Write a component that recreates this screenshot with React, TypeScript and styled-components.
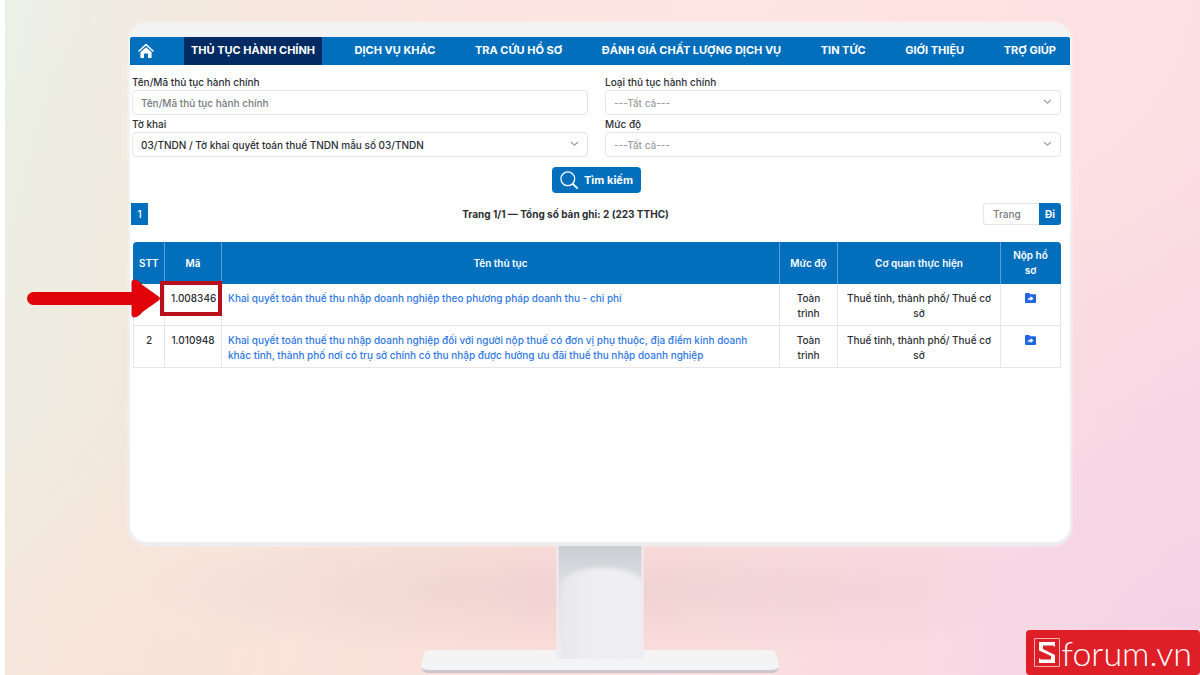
import React from "react";
import styled, { createGlobalStyle, css } from "styled-components";

const blue = "#026fbd";
const line = "#e4e6e8";

const GlobalStyle = createGlobalStyle`
  *, *::before, *::after { box-sizing: border-box; }
  body { margin: 0; background: #fff; font-family: Inter, "Noto Sans", sans-serif; font-weight: 500; color: #2b2f33; }
  button, input, select { font-family: inherit; font-weight: inherit; }
`;

const Scene = styled.div`
  position: relative;
  min-height: 100vh;
  margin-left: 5px;
  padding: 22px 128px 0 123px;
  overflow: hidden;
  background:
    radial-gradient(ellipse 460px 70px at 50% 590px, rgba(170, 140, 150, 0.16), transparent),
    radial-gradient(ellipse 500px 260px at 10% 100%, rgba(253, 224, 216, 0.5), transparent),
    radial-gradient(ellipse 700px 360px at 60% 0, rgba(255, 230, 228, 0.9), transparent),
    radial-gradient(ellipse 460px 460px at 100% 100%, rgba(244, 208, 230, 0.8), transparent),
    linear-gradient(105deg, #ebf0e6 0%, #f2e8dc 18%, #fcdfdb 50%, #fbdde2 85%, #f9d9e4 100%);
`;

const Monitor = styled.div`
  display: flex;
  flex-direction: column;
  padding: 15px 2px 4px;
  border-radius: 20px;
  background: linear-gradient(#f3f3f4, #ececee);
  box-shadow: 0 0 2px rgba(255, 255, 255, 0.8);
`;

const Screen = styled.main`
  min-height: 505px;
  border-radius: 2px 2px 16px 16px;
  background: #fff;
`;

const Nav = styled.nav`
  display: flex;
  justify-content: space-between;
  height: 28px;
  padding-right: 7px;
  border-radius: 2px 2px 0 0;
  background: ${blue};
`;

const HomeLink = styled.a`
  display: flex;
  align-items: center;
  width: 54px;
  padding-left: 8px;
`;

const NavMenu = styled.div`
  flex: 1;
  display: flex;
  justify-content: space-between;
`;

const NavLink = styled.a<{ $active?: boolean }>`
  display: flex;
  align-items: center;
  padding: 0 7px 2px;
  font-size: 11px;
  line-height: 16px;
  font-weight: 700;
  white-space: nowrap;
  color: #fff;
  text-decoration: none;
  background: ${(p) => (p.$active ? "#032b63" : "transparent")};
`;

const SearchForm = styled.form`
  display: grid;
  grid-template-columns: 1fr 1fr;
  column-gap: 17px;
  padding: 9px 9px 0 2px;
`;

const Field = styled.div`
  display: flex;
  flex-direction: column;
  height: 42px;
`;

const Label = styled.label`
  font-size: 10px;
  line-height: 16px;
`;

const controlStyle = css`
  width: 100%;
  height: 25px;
  padding: 0 8px;
  border: 1px solid ${line};
  border-radius: 4px;
  background: #fff;
  font-size: 10px;
  outline: none;
`;

const TextInput = styled.input`
  ${controlStyle}
  color: #2b2f33;
  &::placeholder { color: #777b80; opacity: 1; }
`;

const SelectWrap = styled.div`
  position: relative;
  display: flex;
  svg { position: absolute; right: 9px; top: 8px; pointer-events: none; }
`;

const Select = styled.select<{ $muted?: boolean }>`
  ${controlStyle}
  appearance: none;
  color: ${(p) => (p.$muted ? "#9c9fa3" : "#2b2f33")};
`;

const SubmitRow = styled.div`
  grid-column: 1 / -1;
  display: flex;
  justify-content: center;
  padding-top: 9px;
`;

const SearchButton = styled.button`
  display: flex;
  align-items: center;
  gap: 6px;
  height: 26px;
  padding: 0 8px;
  border: 0;
  border-radius: 4px;
  background: ${blue};
  color: #fff;
  font-size: 11px;
  font-weight: 700;
`;

const Pager = styled.div`
  display: flex;
  align-items: center;
  justify-content: space-between;
  padding: 10px 9px 0 1px;
`;

const PageButton = styled.button`
  width: 17px;
  height: 22px;
  padding: 0;
  border: 0;
  background: ${blue};
  color: #fff;
  font-size: 10px;
`;

const Summary = styled.strong`
  font-size: 10px;
  line-height: 16px;
  font-weight: 700;
`;

const GoTo = styled.form`
  display: flex;
`;

const PageInput = styled.input`
  width: 56px;
  height: 22px;
  padding: 0 9px;
  border: 1px solid ${line};
  border-right: 0;
  border-radius: 3px 0 0 3px;
  font-size: 10px;
  outline: none;
  &::placeholder { color: #777b80; opacity: 1; }
`;

const GoButton = styled.button`
  width: 22px;
  height: 22px;
  padding: 0;
  border: 0;
  border-radius: 0 3px 3px 0;
  background: ${blue};
  color: #fff;
  font-size: 10px;
  font-weight: 700;
`;

const TableWrap = styled.div`
  padding: 17px 9px 0 3px;
`;

const Table = styled.table`
  width: 100%;
  table-layout: fixed;
  border-collapse: separate;
  border-spacing: 0;
  font-size: 10px;
  line-height: 15px;
`;

const Column = styled.col<{ $width?: number }>`
  width: ${(p) => (p.$width ? `${p.$width}px` : "auto")};
`;

const HeadCell = styled.th`
  height: 42px;
  padding: 0 6px;
  border-right: 1px solid #5b9fd2;
  background: ${blue};
  color: #fff;
  font-weight: 600;
  &:first-child { border-top-left-radius: 4px; }
  &:last-child { border-right-color: ${blue}; border-top-right-radius: 4px; }
`;

const Cell = styled.td<{ $name?: boolean }>`
  position: relative;
  height: 42px;
  padding: 7px ${(p) => (p.$name ? 18 : 6)}px 4px 6px;
  border-right: 1px solid ${line};
  border-bottom: 1px solid ${line};
  text-align: ${(p) => (p.$name ? "left" : "center")};
  vertical-align: top;
  &:first-child { border-left: 1px solid ${line}; }
`;

const ProcedureLink = styled.a`
  color: #2f78e4;
  text-decoration: none;
`;

const IconLink = styled.a`
  display: flex;
  justify-content: center;
  padding-top: 2px;
`;

const Highlight = styled.span`
  position: absolute;
  inset: -3px -1px 9px -5px;
  border: 4px solid #b8111d;
  z-index: 1;
`;

const Arrow = styled.svg`
  position: absolute;
  top: -7px;
  right: 100%;
  margin-right: 4px;
  z-index: 1;
`;

const Stand = styled.div`
  display: flex;
  justify-content: center;
`;

const Brand = styled.a`
  position: absolute;
  right: 0;
  bottom: 0;
  display: flex;
  align-items: center;
  gap: 2px;
  height: 45px;
  padding: 0 8px;
  border-radius: 4px;
  background: #df1f28;
  color: #fff;
  font-family: Lato, sans-serif;
  font-size: 34px;
  font-weight: 300;
  line-height: 40px;
  text-decoration: none;
`;

const navItems = [
  "THỦ TỤC HÀNH CHÍNH",
  "DỊCH VỤ KHÁC",
  "TRA CỨU HỒ SƠ",
  "ĐÁNH GIÁ CHẤT LƯỢNG DỊCH VỤ",
  "TIN TỨC",
  "GIỚI THIỆU",
  "TRỢ GIÚP",
];

const columns: { title: string; width?: number }[] = [
  { title: "STT", width: 32 },
  { title: "Mã", width: 57 },
  { title: "Tên thủ tục" },
  { title: "Mức độ", width: 58 },
  { title: "Cơ quan thực hiện", width: 163 },
  { title: "Nộp hồ sơ", width: 60 },
];

const rows = [
  {
    code: "1.008346",
    name: "Khai quyết toán thuế thu nhập doanh nghiệp theo phương pháp doanh thu - chi phí",
    marked: true,
  },
  {
    code: "1.010948",
    name: "Khai quyết toán thuế thu nhập doanh nghiệp đối với người nộp thuế có đơn vị phụ thuộc, địa điểm kinh doanh khác tỉnh, thành phố nơi có trụ sở chính có thu nhập được hưởng ưu đãi thuế thu nhập doanh nghiệp",
    marked: false,
  },
];

const HomeIcon = () => (
  <svg width="16" height="16" viewBox="0 0 16 16" fill="none">
    <path d="M1 8 8 1.5 15 8" stroke="#fff" strokeWidth="1.6" strokeLinecap="round" strokeLinejoin="round" />
    <path d="M8 4.200 13.600 9.300v5.100a.6.6 0 0 1-.6.6H10v-4a.6.6 0 0 0-.6-.6H6.600a.6.6 0 0 0-.6.6v4H3a.6.6 0 0 1-.6-.6V9.300Z" fill="#fff" />
  </svg>
);

const Chevron = () => (
  <svg width="9" height="8" viewBox="0 0 9 8" fill="none">
    <path d="M1 2 4.500 5.200 8 2" stroke="#9da1a5" strokeWidth="1.200" />
  </svg>
);

const SearchIcon = () => (
  <svg width="18" height="18" viewBox="0 0 18 18" fill="none" stroke="#fff">
    <circle cx="7.800" cy="7.800" r="6.900" strokeWidth="1.300" />
    <path d="m12.800 12.800 4.200 4.200" strokeWidth="1.800" strokeLinecap="round" />
  </svg>
);

const FolderIcon = () => (
  <svg width="11" height="10" viewBox="0 0 11 10">
    <path d="M1 0h3.200l1.100 1.200H10a1 1 0 0 1 1 1V9a1 1 0 0 1-1 1H1a1 1 0 0 1-1-1V1a1 1 0 0 1 1-1Z" fill="#1f66e0" />
    <path d="M2.600 7.600C2.800 5.600 4 4.700 5.600 4.600V3.200l3 2.400-3 2.300V6.500C4.400 6.500 3.400 6.800 2.600 7.600Z" fill="#fff" />
  </svg>
);

const PointerArrow = () => (
  <Arrow width="133" height="42" viewBox="0 0 133 42" aria-hidden="true">
    <path d="M6.500 14H108v13H6.500a6.500 6.500 0 0 1 0-13Z" fill="#e00209" />
    <path d="M104.500 4.500q.5-4 5-2.500 3 1 6 5l15.500 11q4 2.500 0 5l-15.500 11q-3 4-6 5-4.500 1.500-5-2.500Z" fill="#e00209" />
  </Arrow>
);

function SelectField({ id, label, value, muted }: { id: string; label: string; value: string; muted?: boolean }) {
  return (
    <Field>
      <Label htmlFor={id}>{label}</Label>
      <SelectWrap>
        <Select id={id} $muted={muted} defaultValue={value}>
          <option>{value}</option>
        </Select>
        <Chevron />
      </SelectWrap>
    </Field>
  );
}

const MonitorStand = () => (
  <svg width="360" height="129" viewBox="0 0 360 129" aria-hidden="true">
    <defs>
      <linearGradient id="neck" x1="0" x2="0" y1="0" y2="1">
        <stop offset="0" stopColor="#cbccd2" />
        <stop offset="0.3" stopColor="#dcdde1" />
        <stop offset="1" stopColor="#eeeef1" />
      </linearGradient>
      <linearGradient id="shine" x1="0" x2="1" y1="0" y2="0">
        <stop offset="0" stopColor="#e8e8ec" />
        <stop offset="0.5" stopColor="#f0f0f3" />
        <stop offset="1" stopColor="#ededf1" />
      </linearGradient>
      <filter id="soft"><feGaussianBlur stdDeviation="2" /></filter>
      <clipPath id="neckClip"><path d="M137 0h86v113h-86z" /></clipPath>
    </defs>
    <path d="M9 104h342q4 0 5 4l3 12q1 6-8 6H9q-9 0-8-6l3-12q1-4 5-4Z" fill="#f4f4f5" />
    <path d="M1 121q1 6 8 6h342q7 0 8-6-2 3-8 3H9q-6 0-8-3Z" fill="#cdc5cb" />
    <path d="M137 0h86v113h-86z" fill="url(#neck)" />
    <g clipPath="url(#neckClip)">
      <path d="M141 125V38q8-16 40-16 36 0 44 16v87Z" fill="url(#shine)" filter="url(#soft)" />
    </g>
    <path d="M137.500 0v113M222.500 0v113" stroke="#eeeef1" strokeWidth="2" />
  </svg>
);

export default function App() {
  return (
    <>
      <GlobalStyle />
      <Scene>
        <Monitor>
          <Screen>
            <Nav>
              <HomeLink href="#" aria-label="Trang chủ"><HomeIcon /></HomeLink>
              <NavMenu>
                {navItems.map((item, i) => (
                  <NavLink key={item} href="#" $active={i === 0}>{item}</NavLink>
                ))}
              </NavMenu>
            </Nav>
            <SearchForm onSubmit={(e) => e.preventDefault()}>
              <Field>
                <Label htmlFor="name">Tên/Mã thủ tục hành chính</Label>
                <TextInput id="name" placeholder="Tên/Mã thủ tục hành chính" />
              </Field>
              <SelectField id="type" label="Loại thủ tục hành chính" value="---Tất cả---" muted />
              <SelectField id="form" label="Tờ khai" value="03/TNDN / Tờ khai quyết toán thuế TNDN mẫu số 03/TNDN" />
              <SelectField id="level" label="Mức độ" value="---Tất cả---" muted />
              <SubmitRow>
                <SearchButton type="submit"><SearchIcon />Tìm kiếm</SearchButton>
              </SubmitRow>
            </SearchForm>
            <Pager>
              <PageButton type="button">1</PageButton>
              <Summary>Trang 1/1 — Tổng số bản ghi: 2 (223 TTHC)</Summary>
              <GoTo onSubmit={(e) => e.preventDefault()}>
                <PageInput aria-label="Trang" placeholder="Trang" />
                <GoButton type="submit">Đi</GoButton>
              </GoTo>
            </Pager>
            <TableWrap>
              <Table>
                <colgroup>
                  {columns.map((c) => <Column key={c.title} $width={c.width} />)}
                </colgroup>
                <thead>
                  <tr>
                    {columns.map((c) => <HeadCell key={c.title} scope="col">{c.title}</HeadCell>)}
                  </tr>
                </thead>
                <tbody>
                  {rows.map((row, i) => (
                    <tr key={row.code}>
                      <Cell>{i + 1}</Cell>
                      <Cell>
                        {row.code}
                        {row.marked && <Highlight><PointerArrow /></Highlight>}
                      </Cell>
                      <Cell $name><ProcedureLink href="#">{row.name}</ProcedureLink></Cell>
                      <Cell>Toàn trình</Cell>
                      <Cell>Thuế tỉnh, thành phố/ Thuế cơ sở</Cell>
                      <Cell><IconLink href="#" aria-label="Nộp hồ sơ"><FolderIcon /></IconLink></Cell>
                    </tr>
                  ))}
                </tbody>
              </Table>
            </TableWrap>
          </Screen>
        </Monitor>
        <Stand><MonitorStand /></Stand>
        <Brand href="#">
          <svg width="26" height="29" viewBox="0 0 26 29" fill="none">
            <path d="M.5.500h25v28H.500z" stroke="#f6b0b2" />
            <path d="M5 4h16v5l-2-1.500H9V11l12 6v8H5v-5l2 1.500h10V18L5 12.500Z" fill="#fff" />
          </svg>
          forum.vn
        </Brand>
      </Scene>
    </>
  );
}
